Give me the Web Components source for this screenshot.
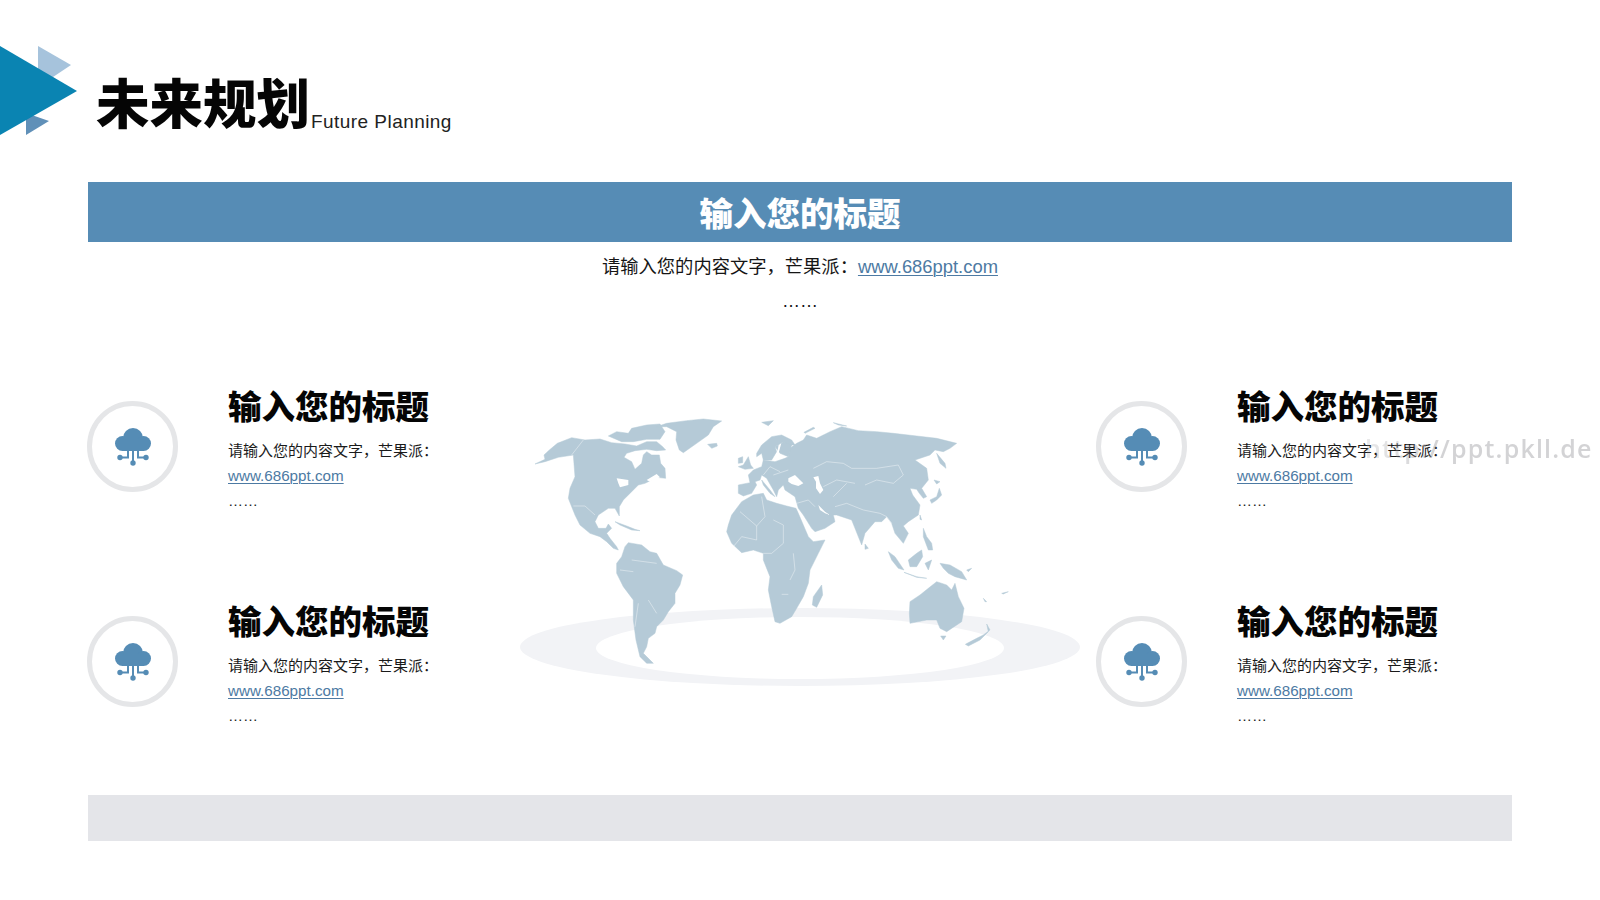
<!DOCTYPE html>
<html lang="zh-CN">
<head>
<meta charset="utf-8">
<title>未来规划</title>
<style>
html,body{margin:0;background:#fff}
body{font-family:"Liberation Sans","Noto Sans CJK SC",sans-serif;color:#111}
</style>
</head>
<body>
<slide-page>
  <slide-header slot="header" heading="未来规划" sub="Future Planning"></slide-header>
  <title-banner slot="banner">输入您的标题</title-banner>
  <intro-text slot="intro"></intro-text>
  <info-item slot="left"></info-item>
  <info-item slot="left"></info-item>
  <world-map slot="map"></world-map>
  <info-item slot="right"></info-item>
  <info-item slot="right"></info-item>
  <foot-bar slot="foot"></foot-bar>
  <water-mark slot="mark">http://ppt.pkll.de</water-mark>
</slide-page>
<script>
const CJK='"Noto Sans CJK SC","Liberation Sans",sans-serif';
const LAT='"Liberation Sans","Noto Sans CJK SC",sans-serif';
function def(name,html,init){
  customElements.define(name,class extends HTMLElement{
    constructor(){super();this.attachShadow({mode:'open'}).innerHTML=typeof html==='function'?html(this):html;}
    connectedCallback(){if(init)init(this);}
  });
}
def('slide-page',`<style>
:host{display:block;width:1600px;height:900px;position:relative;overflow:hidden;background:#fff}
.stage{display:grid;grid-template-columns:423px 586px 1fr;padding-left:87px;height:410px;margin-top:71px}
.col{display:flex;flex-direction:column;gap:40px}
</style>
<slot name="header"></slot><slot name="banner"></slot><slot name="intro"></slot>
<div class="stage"><div class="col"><slot name="left"></slot></div><div><slot name="map"></slot></div><div class="col"><slot name="right"></slot></div></div>
<slot name="foot"></slot><slot name="mark"></slot>`);

def('slide-header',el=>`<style>
:host{display:flex;height:182px;box-sizing:border-box;padding-top:46px;align-items:flex-start}
svg{flex:none;display:block}
.t{display:flex;align-items:flex-end;margin-left:18px;margin-top:19px}
h1{margin:0;font:900 53.5px/72px ${CJK};color:#050505;padding-bottom:3px}
span{font:400 19px/24px ${LAT};color:#222;margin:0 0 6px 1px;letter-spacing:.45px}
</style>
<svg width="78" height="90" viewBox="0 46 78 90">
<polygon points="38,46 71,65 50,79 38,79" fill="#a6c3dc"/>
<polygon points="26,113 49,121 26,135" fill="#6090b8"/>
<polygon points="0,46 77,91 0,135" fill="#0a84b2"/>
</svg>
<div class="t"><h1>${el.getAttribute('heading')}</h1><span>${el.getAttribute('sub')}</span></div>`);

def('title-banner',`<style>
:host{display:flex;margin:0 88px;height:60px;background:#568cb5;align-items:center;justify-content:center;color:#fff;font:900 33.5px/60px ${CJK}}
</style><slot></slot>`);

def('link-text',`<style>
:host{display:inline;color:#4d7aa3;text-decoration:underline;text-decoration-thickness:1px;text-underline-offset:2px;font-family:${LAT}}
</style><slot></slot>`);

def('intro-text',`<style>
:host{display:block;text-align:center;padding-top:10px;color:#151515}
.a{font:400 18.3px/26px ${CJK};height:26px;white-space:nowrap}
link-text{font-size:18.4px}
.d{font:400 18px/26px ${LAT};margin-top:10px}
</style>
<div class="a">请输入您的内容文字，芒果派：<link-text>www.686ppt.com</link-text></div>
<div class="d">……</div>`);

const cloud=`<svg width="36" height="38" viewBox="0 0 36 38">
<g fill="#558cb5"><circle cx="7.5" cy="15.5" r="7.5"/><circle cx="18" cy="10" r="10"/><circle cx="28.5" cy="15.5" r="7.5"/><rect x="7" y="12" width="22" height="11" />
<circle cx="5" cy="29.5" r="2.7"/><circle cx="31" cy="29.5" r="2.7"/><circle cx="18" cy="35" r="2.7"/></g>
<path d="M18 22V34M5 29.5H13V22M31 29.5H23V22" fill="none" stroke="#558cb5" stroke-width="2"/>
</svg>`;
def('info-item',`<style>
:host{display:grid;grid-template-columns:91px 1fr;column-gap:50px;height:175px;box-sizing:border-box}
.ring{width:91px;height:91px;box-sizing:border-box;border:5.5px solid #e5e6e8;border-radius:50%;display:flex;align-items:center;justify-content:center;margin-top:16px}
.ring svg{display:block}
h2{margin:0;font:900 33.5px/40px ${CJK};color:#050505;white-space:nowrap}
.b{font:400 15px/26px ${CJK};color:#1a1a1a;margin-top:12px;white-space:nowrap}
link-text{font-size:15.2px;line-height:26px;display:inline-block}
.l{height:26px;line-height:26px}
.d{font:400 15px/26px ${LAT};color:#222;margin-top:-1px}
</style>
<div class="ring">${cloud}</div>
<div><h2>输入您的标题</h2><div class="b">请输入您的内容文字，芒果派：</div><div class="l"><link-text>www.686ppt.com</link-text></div><div class="d">……</div></div>`);

def('foot-bar',`<style>:host{display:block;height:46px;margin:0 88px;background:#e4e5e9}</style>`);

def('water-mark',`<style>:host{position:absolute;left:1365px;top:431px;font:600 25px/34px "Open Sans",sans-serif;color:rgba(150,150,156,.42);white-space:nowrap;letter-spacing:1.2px;-webkit-mask-image:linear-gradient(to right,rgba(0,0,0,.5),#000 30%);mask-image:linear-gradient(to right,rgba(0,0,0,.5),#000 30%)}</style><slot></slot>`);

def('world-map',`<style>
:host{display:block;width:586px;height:300px;margin-top:15px}
svg{display:block;overflow:visible;filter:blur(.4px)}
.l{fill:#b5cad7;stroke:#b5cad7;stroke-width:1.5;stroke-linejoin:round}
.w{fill:#fff}
.b{fill:none;stroke:#fff;stroke-width:1.6;stroke-opacity:.75;stroke-linejoin:round}
</style>
<svg width="586" height="300" viewBox="510 400 586 300">
<ellipse cx="800" cy="647" rx="280" ry="39" fill="#f2f3f6"/>
<ellipse cx="800" cy="648" rx="204" ry="31" fill="#fff"/>
<g transform="translate(500 400) scale(.33333)">
<path class="l" d="M105,192L135,178L132,165L148,150L172,130L215,113L255,120L300,117L335,128L375,132L410,138L440,125L470,125L488,140L497,150L470,152L440,148L405,152L380,160L372,172L395,185L405,208L425,190L430,165L440,155L455,165L478,165L482,190L495,205L497,235L470,232L445,245L435,250L415,255L395,275L370,300L358,320L358,348L345,325L325,325L295,345L285,365L295,385L318,385L325,372L335,385L320,400L330,415L350,440L355,450L340,445L320,425L300,410L270,400L240,375L225,345L215,320L205,295L210,265L225,230L220,165L175,172L135,185Z"/>
<path class="l" d="M325,108L350,95L385,100L395,85L440,75L480,72L495,95L480,118L440,118L400,125L365,125Z"/>
<path class="l" d="M470,80L500,70L560,62L610,57L665,63L640,80L625,105L590,130L550,158L538,150L528,120L530,95L500,80Z"/>
<path class="l" d="M623,133L650,130L652,138L635,145Z"/>
<path class="l" d="M345,365L380,378L405,388L420,392L395,390L360,375Z"/>
<path class="w" d="M350,235L385,240L385,255L360,262L355,250ZM440,240L470,222L480,232L450,245Z"/>
<path class="l" d="M385,428L425,435L450,455L470,460L490,495L530,512L548,525L540,555L525,580L525,610L505,635L490,660L470,680L465,700L445,715L440,740L430,760L460,790L440,790L420,770L408,720L400,660L400,600L370,560L350,520L350,490L365,470L375,440Z"/>
<path class="l" d="M685,375L695,345L725,305L760,285L790,280L800,300L830,310L860,318L888,325L895,340L925,410L940,425L975,420L955,460L930,510L925,550L910,590L890,625L875,650L840,670L825,665L815,620L805,570L810,530L790,480L790,460L760,450L725,458L695,430L680,395Z"/>
<path class="b" d="M720,335L770,378L795,350L785,290M770,378L770,420L725,410L700,440M820,360L850,375L850,430L815,460L790,460M880,460L885,510L870,540M845,583H865M250,120L215,165M220,318H255L285,345M395,480L470,490M360,510L400,515M415,610L405,680M445,600L470,640"/>
</g>
<g transform="translate(780 400) scale(.33333)">
<path class="l" d="M-125,255L-90,248L-95,225L-80,210L-55,200L-50,180L-15,185L15,175L25,170L30,145L50,130L70,120L80,105L110,115L150,95L185,80L235,92L290,95L340,100L410,108L470,115L530,130L510,145L490,155L465,150L450,165L405,180L440,205L445,240L425,265L440,290L430,295L418,280L410,268L390,265L398,285L420,315L415,345L385,365L370,378L385,400L370,430L345,400L335,370L320,350L305,365L285,365L255,400L245,435L225,385L215,360L170,345L160,345L165,365L135,385L105,395L95,385L70,345L55,325L45,290L15,270L10,255L-5,270L-10,290L-20,270L-40,235L-55,225L-60,240L-75,245L-70,255L-85,280L-110,288L-125,280Z"/>
<path class="l" d="M-55,240L-30,270L-15,290L-30,280L-50,255Z"/>
<path class="l" d="M-70,160L-55,135L-25,110L5,105L35,120L45,135L25,135L10,125L-15,140L-10,155L-25,180L-50,180L-55,160L-70,170Z"/>
<path class="l" d="M10,125L35,135L25,170L0,160L-15,140Z"/>
<path class="l" d="M-110,195L-95,170L-88,195L-80,205L-105,208L-125,200Z"/>
<path class="l" d="M-125,175L-112,170L-112,188L-125,190Z"/>
<path class="l" d="M-55,67L-20,62L-35,77ZM75,100L105,85L100,82L72,97ZM160,68L200,78L175,75Z"/>
<path class="w" d="M25,235L45,225L60,240L70,250L55,258L35,252L25,245ZM100,232L115,228L120,250L130,270L120,282L108,265L108,245ZM115,315L135,335L150,345L135,340L120,330ZM-4,135L4,130L-4,158L-15,180L-20,178L-8,155Z"/>
<path class="b" d="M100,205L140,185L190,190L215,205L290,205L355,195L370,225L340,250L290,240L255,255M160,290L200,250M165,320L200,310L250,330L300,340L320,350M320,350L335,370M0,215L-30,200L-50,225M-20,225L25,210M50,310L85,300L105,320M130,260L170,240L225,250"/>
<path class="l" d="M470,160L495,190L498,205L480,190ZM462,240L480,245L470,252ZM450,300L470,290L478,265L485,285L470,300L455,310ZM255,432L265,445L255,448ZM125,555L128,585L110,622L97,615L100,590Z"/>
<path class="l" d="M325,455L345,470L372,510L355,505L335,480ZM372,517L410,530L440,535L410,532ZM385,480L410,460L425,450L428,470L410,500L390,500ZM430,385L440,410L455,430L458,450L445,450L430,410ZM435,490L455,480L445,510ZM480,490L510,495L545,515L560,540L525,530L505,520L490,505ZM420,345L425,360L420,358Z"/>
<path class="l" d="M390,605L420,585L445,565L470,545L500,555L515,570L525,550L535,590L552,625L545,665L500,695L480,685L470,660L440,660L390,670L388,640Z"/>
<path class="l" d="M482,708L498,708L490,720ZM556,733L590,715L610,705L630,690L620,672L625,695L600,720L565,738Z"/>
<path class="l" d="M610,595L620,605L615,605ZM560,510L575,505L565,515ZM665,580L685,575L670,582Z"/>
</g>
</svg>`);
</script>
</body>
</html>
